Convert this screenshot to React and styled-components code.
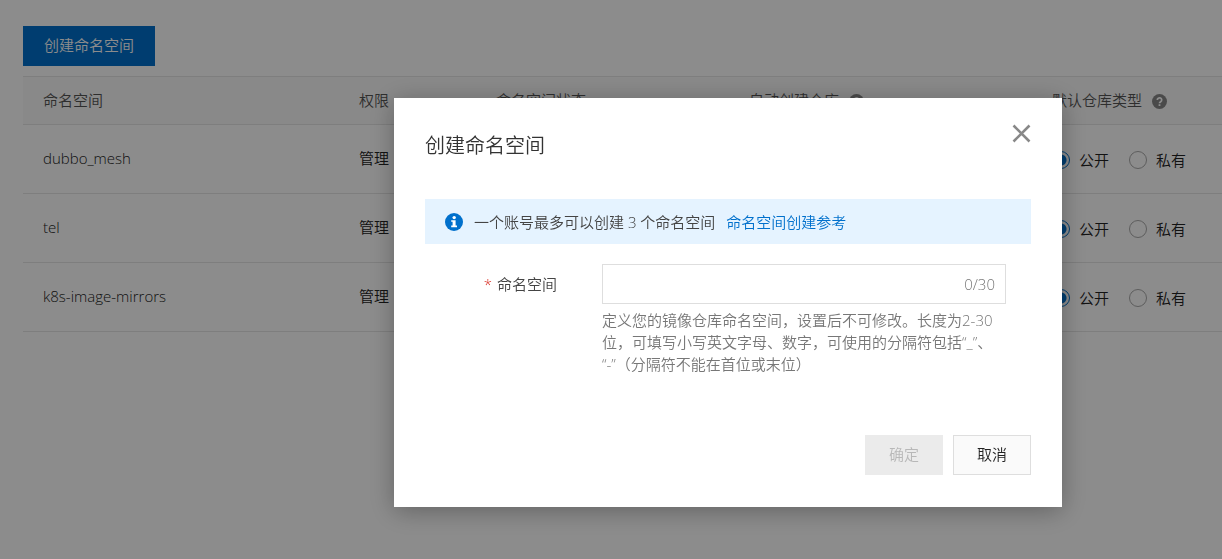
import React, { useState } from 'react';
import styled, { createGlobalStyle } from 'styled-components';

const GlobalStyle = createGlobalStyle`
  * {
    box-sizing: border-box;
  }

  body {
    margin: 0;
    background: #fff;
    color: #333;
    font-family: 'Open Sans', 'Noto Sans CJK SC', sans-serif;
    font-size: 15px;
    font-weight: 350;
    line-height: 22px;
    text-spacing-trim: space-all;
  }

  button,
  input {
    font: inherit;
  }
`;

// Page
const Page = styled.main`
  padding: 26px 0 0 23px;
`;

const Button = styled.button`
  height: 40px;
  padding: 0 ${(props) => (props.$wide ? 20 : 23)}px 2px;
  border: 1px solid ${(props) => (props.$primary ? '#0070cc' : '#dedede')};
  background: ${(props) => (props.$primary ? '#0070cc' : '#fafafa')};
  color: ${(props) => (props.$primary ? '#fff' : '#222')};
  cursor: pointer;

  &:disabled {
    border-color: #ebebeb;
    background: #ebebeb;
    color: #b8b8b8;
    cursor: not-allowed;
  }
`;

const Table = styled.table`
  width: 100%;
  margin-top: 10px;
  table-layout: fixed;
  border-collapse: collapse;
`;

const Col = styled.col`
  width: ${(props) => props.$width};
`;

const HeadCell = styled.th`
  height: 48px;
  padding: 0 20px 2px;
  border-top: 1px solid #e5e5e5;
  border-bottom: 1px solid #e5e5e5;
  background: #fafafa;
  color: #555;
  font-weight: 350;
  text-align: left;
  white-space: nowrap;
`;

const Cell = styled.td`
  height: 69px;
  padding: ${(props) => (props.$control ? '2px 20px 0' : '0 20px 2px')};
  border-bottom: 1px solid #e5e5e5;
  color: #222;
  white-space: nowrap;
`;

const HeadLabel = styled.span`
  display: flex;
  align-items: center;
  gap: 10px;

  svg {
    margin-top: 3px;
  }
`;

const RadioGroup = styled.div`
  display: flex;
  gap: 20px;
`;

const RadioLabel = styled.label`
  display: flex;
  align-items: center;
  gap: 9px;
`;

const Radio = styled.input`
  appearance: none;
  width: 18px;
  height: 18px;
  margin: 0;
  border: 1px solid ${(props) => (props.checked ? '#0070cc' : '#aaa')};
  border-radius: 50%;
  background: ${(props) =>
    props.checked ? 'radial-gradient(circle, #0070cc 5px, #fff 6px)' : '#fff'};
`;

// Dialog
const Overlay = styled.div`
  position: fixed;
  inset: 0;
  padding: 98px 160px 32px 394px;
  background: rgba(0, 0, 0, 0.45);
`;

const Dialog = styled.section`
  padding: 26px 31px 32px;
  background: #fff;
  box-shadow: 0 4px 24px rgba(0, 0, 0, 0.3);
`;

const DialogHeader = styled.header`
  display: flex;
  align-items: flex-start;
  justify-content: space-between;
`;

const Title = styled.h2`
  margin: 6px 0 0;
  font-size: 20px;
  font-weight: 350;
  line-height: 32px;
`;

const CloseButton = styled.button`
  display: flex;
  padding: 0;
  border: 0;
  background: none;
  color: #888;
  cursor: pointer;
`;

const Notice = styled.div`
  display: flex;
  align-items: center;
  gap: 11px;
  min-height: 45px;
  margin-top: 37px;
  padding: 0 20px;
  background: #e5f3ff;
  color: #444;
`;

const Link = styled.a`
  color: #0070cc;
  text-decoration: none;
`;

const Field = styled.div`
  display: flex;
  gap: 45px;
  margin-top: 20px;
  padding-right: 25px;
`;

const FieldLabel = styled.label`
  flex: 0 0 132px;
  color: #444;
  line-height: 40px;
  text-align: right;
`;

const Required = styled.span`
  margin-right: 5px;
  color: #d93026;
`;

const FieldBody = styled.div`
  flex: 1;
  min-width: 0;
`;

const InputBox = styled.div`
  display: flex;
  align-items: center;
  height: 40px;
  padding: 0 10px;
  border: 1px solid #dedede;
  color: #777;
`;

const TextInput = styled.input`
  flex: 1;
  min-width: 0;
  padding: 0;
  border: 0;
  outline: 0;
  background: none;
  color: #333;
`;

const Help = styled.p`
  margin: 5px -10px 0 0;
  color: #777;
`;

const DialogFooter = styled.footer`
  display: flex;
  justify-content: flex-end;
  gap: 10px;
  margin-top: 60px;
`;

const HelpIcon = () => (
  <svg width="15" height="15" viewBox="0 0 15 15" aria-hidden="true">
    <circle cx="7.5" cy="7.5" r="7.5" fill="#888" />
    <path d="M5.3 6a2.2 2.1 0 1 1 3.4 1.7c-.8.5-1.2.8-1.2 1.6" fill="none" stroke="#fff" strokeWidth="1.7" />
    <rect x="6.6" y="10.2" width="1.8" height="1.8" fill="#fff" />
  </svg>
);

const InfoIcon = () => (
  <svg width="18" height="18" viewBox="0 0 18 18" aria-hidden="true">
    <circle cx="9" cy="9" r="9" fill="#0070cc" />
    <circle cx="9.2" cy="4.6" r="1.7" fill="#fff" />
    <path d="M6.2 7.2h4.4v5.4h1.4v1.6H6.2v-1.6h1.4V8.8H6.2z" fill="#fff" />
  </svg>
);

const CloseIcon = () => (
  <svg width="19" height="19" viewBox="0 0 19 19" aria-hidden="true">
    <path d="M1.5 1.5l16 16M17.5 1.5l-16 16" fill="none" stroke="currentColor" strokeWidth="2.6" />
  </svg>
);

const namespaces = ['dubbo_mesh', 'tel', 'k8s-image-mirrors'];

const NamespaceRow = ({ name }) => {
  const [type, setType] = useState('公开');

  return (
    <tr>
      <Cell>{name}</Cell>
      <Cell>管理</Cell>
      <Cell />
      <Cell />
      <Cell $control>
        <RadioGroup>
          {['公开', '私有'].map((option) => (
            <RadioLabel key={option}>
              <Radio
                type="radio"
                name={name}
                checked={type === option}
                onChange={() => setType(option)}
              />
              {option}
            </RadioLabel>
          ))}
        </RadioGroup>
      </Cell>
    </tr>
  );
};

const CreateDialog = ({ onClose }) => {
  const [value, setValue] = useState('');

  return (
    <Overlay>
      <Dialog role="dialog" aria-modal="true" aria-labelledby="dialog-title">
        <DialogHeader>
          <Title id="dialog-title">创建命名空间</Title>
          <CloseButton type="button" onClick={onClose}>
            <CloseIcon />
          </CloseButton>
        </DialogHeader>
        <Notice>
          <InfoIcon />
          <span>一个账号最多可以创建 3 个命名空间</span>
          <Link href="#reference">命名空间创建参考</Link>
        </Notice>
        <Field>
          <FieldLabel htmlFor="namespace">
            <Required>*</Required>
            命名空间
          </FieldLabel>
          <FieldBody>
            <InputBox>
              <TextInput
                id="namespace"
                maxLength={30}
                value={value}
                onChange={(e) => setValue(e.target.value)}
              />
              <span>{value.length}/30</span>
            </InputBox>
            <Help>
              定义您的镜像仓库命名空间，设置后不可修改。长度为2-30
              <br />
              位，可填写小写英文字母、数字，可使用的分隔符包括“_”、
              <br />
              “-”（分隔符不能在首位或末位）
            </Help>
          </FieldBody>
        </Field>
        <DialogFooter>
          <Button type="button" disabled={!value}>确定</Button>
          <Button type="button" onClick={onClose}>取消</Button>
        </DialogFooter>
      </Dialog>
    </Overlay>
  );
};

const App = () => {
  const [open, setOpen] = useState(true);

  return (
    <>
      <GlobalStyle />
      <Page>
        <Button type="button" $primary $wide onClick={() => setOpen(true)}>创建命名空间</Button>
        <Table>
          <colgroup>
            <Col $width="316px" />
            <Col $width="137px" />
            <Col $width="253px" />
            <Col $width="303px" />
            <Col $width="auto" />
          </colgroup>
          <thead>
            <tr>
              <HeadCell>命名空间</HeadCell>
              <HeadCell>权限</HeadCell>
              <HeadCell>命名空间状态</HeadCell>
              <HeadCell><HeadLabel>自动创建仓库 <HelpIcon /></HeadLabel></HeadCell>
              <HeadCell><HeadLabel>默认仓库类型 <HelpIcon /></HeadLabel></HeadCell>
            </tr>
          </thead>
          <tbody>
            {namespaces.map((name) => (
              <NamespaceRow key={name} name={name} />
            ))}
          </tbody>
        </Table>
      </Page>
      {open && <CreateDialog onClose={() => setOpen(false)} />}
    </>
  );
};

export default App;
